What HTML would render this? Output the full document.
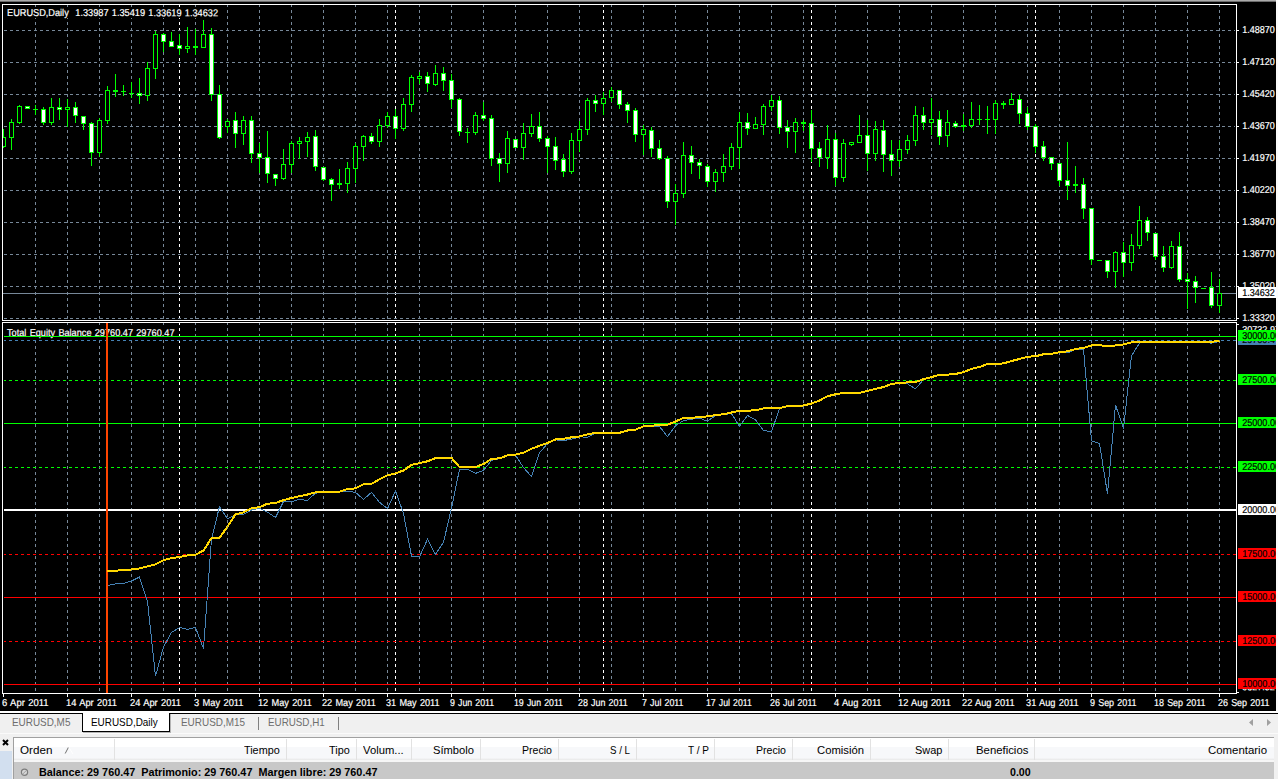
<!DOCTYPE html>
<html lang="es"><head><meta charset="utf-8"><title>EURUSD,Daily</title>
<style>
html,body{margin:0;padding:0;background:#f0f0f0;overflow:hidden}
body{width:1278px;height:779px;position:relative;font-family:"Liberation Sans", Arial, sans-serif;}
#chart{position:absolute;left:0;top:0;display:block}
#chart text{font-family:"Liberation Sans", Arial, sans-serif;font-size:10px;fill:#fff;stroke:#fff;stroke-width:.2px;paint-order:stroke;word-spacing:.8px}
.g{stroke:#778899;stroke-width:1;stroke-dasharray:3 3;fill:none}
.s{stroke:#fff;stroke-width:1;stroke-dasharray:3 3;fill:none}
.w{stroke:#00ff00;stroke-width:1;fill:none}
.u{fill:#000;stroke:#00ff00;stroke-width:1}
.d{fill:#fff;stroke:#00ff00;stroke-width:1}
.f{fill:#00ff00;stroke:none}
#tabs{position:absolute;left:0;top:711px;width:1278px;height:26px;background:#f0f0f0;font-size:11px}
.x{position:absolute;white-space:nowrap;line-height:13px;font-size:11px;transform-origin:0 0;display:block}
#term{position:absolute;left:0;top:737px;width:1278px;height:42px;background:#f0f0f0;font-size:11px}
#term .h{position:absolute;top:9px;color:#000;white-space:nowrap;line-height:13px}
#term .sep{position:absolute;top:2px;width:1px;height:21px;background:#e2e2e2}
</style></head><body>
<svg id="chart" width="1278" height="711" viewBox="0 0 1278 711" shape-rendering="crispEdges">
<rect x="0" y="0" width="1278" height="711" fill="#000"/>
<rect x="0" y="0" width="1278" height="1" fill="#ababab"/>
<rect x="0" y="1" width="1278" height="1" fill="#6d6d6d"/>
<rect x="1276" y="0" width="2" height="711" fill="#fbfbfb"/>
<path class="g" d="M35.5 4V693M67.5 4V693M99.5 4V693M131.5 4V693M163.5 4V693M195.5 4V693M227.5 4V693M259.5 4V693M291.5 4V693M323.5 4V693M355.5 4V693M387.5 4V693M419.5 4V693M451.5 4V693M483.5 4V693M515.5 4V693M547.5 4V693M579.5 4V693M611.5 4V693M643.5 4V693M675.5 4V693M707.5 4V693M739.5 4V693M771.5 4V693M803.5 4V693M835.5 4V693M867.5 4V693M899.5 4V693M931.5 4V693M963.5 4V693M995.5 4V693M1027.5 4V693M1059.5 4V693M1091.5 4V693M1123.5 4V693M1155.5 4V693M1187.5 4V693M1219.5 4V693"/>
<path class="s" d="M179.5 4V693M395.5 4V693M603.5 4V693M811.5 4V693M1035.5 4V693"/>
<path class="g" d="M4 30.5H1235M4 62.5H1235M4 94.5H1235M4 126.5H1235M4 158.5H1235M4 190.5H1235M4 222.5H1235M4 254.5H1235M4 286.5H1235M4 318.5H1235"/>
<rect x="0" y="321" width="1276" height="1" fill="#000"/>
<rect x="3" y="293" width="1233" height="1" fill="#778899"/>
<g clip-path="url(#cm)">
<clipPath id="cm"><rect x="3" y="5" width="1233" height="315"/></clipPath>
<path class="w" d="M3.5 129V148M11.5 119V150M19.5 105V124M27.5 106V109M35.5 105V115M43.5 107V125M51.5 98V125M59.5 98V120M67.5 99V127M75.5 102V123M83.5 116V130M91.5 122V166M99.5 118V157M107.5 86V124M115.5 74V97M123.5 85V96M131.5 82V98M139.5 78V104M147.5 62V101M155.5 31V79M163.5 33V52M171.5 32V47M179.5 34V55M187.5 27V53M195.5 29V55M203.5 20V48M211.5 28V101M219.5 85V139M227.5 119V133M235.5 112V148M243.5 116V145M251.5 116V163M259.5 143V173M267.5 131V183M275.5 174V186M283.5 149V180M291.5 141V173M299.5 137V159M307.5 132V157M315.5 130V171M323.5 167V181M331.5 178V201M339.5 169V189M347.5 162V193M355.5 143V183M363.5 135V161M371.5 133V144M379.5 119V147M387.5 112V128M395.5 109V139M403.5 98V131M411.5 75V112M419.5 72V84M427.5 72V92M435.5 65V86M443.5 67V91M451.5 74V108M459.5 98V136M467.5 128V143M475.5 112V135M483.5 102V121M491.5 115V166M499.5 153V182M507.5 131V173M515.5 139V148M523.5 123V160M531.5 114V137M539.5 112V142M547.5 136V173M555.5 137V170M563.5 154V177M571.5 133V174M579.5 121V152M587.5 98V135M595.5 95V112M603.5 92V115M611.5 87V102M619.5 90V109M627.5 102V123M635.5 108V142M643.5 125V155M651.5 127V157M659.5 140V160M667.5 156V208M675.5 184V225M683.5 142V198M691.5 146V174M699.5 159V179M707.5 164V187M715.5 169V192M723.5 154V182M731.5 143V170M739.5 112V169M747.5 113V135M755.5 117V129M763.5 104V135M771.5 95V111M779.5 96V134M787.5 120V148M795.5 118V153M803.5 120V131M811.5 110V162M819.5 142V167M827.5 125V169M835.5 133V186M843.5 139V182M851.5 142V146M859.5 115V143M867.5 120V171M875.5 121V161M883.5 120V172M891.5 140V176M899.5 140V167M907.5 135V154M915.5 106V146M923.5 107V130M931.5 98V135M939.5 111V145M947.5 110V147M955.5 121V128M963.5 114V131M971.5 102V128M979.5 105V125M987.5 106V134M995.5 100V134M1003.5 101V109M1011.5 93V105M1019.5 95V124M1027.5 107V130M1035.5 124V153M1043.5 141V161M1051.5 157V170M1059.5 163V186M1067.5 142V200M1075.5 166V193M1083.5 178V219M1091.5 208V265M1107.5 260V278M1115.5 251V288M1123.5 242V277M1131.5 234V271M1139.5 206V249M1147.5 217V241M1155.5 233V260M1163.5 246V272M1171.5 241V269M1179.5 232V282M1187.5 273V309M1195.5 276V303M1211.5 272V308M1219.5 279V313"/>
<path class="u" d="M1.5 137.5h4v9h-4zM9.5 122.5h4v15h-4zM17.5 106.5h4v16h-4zM49.5 107.5h4v15h-4zM65.5 107.5h4v2h-4zM97.5 120.5h4v32h-4zM105.5 90.5h4v30h-4zM145.5 68.5h4v27h-4zM153.5 34.5h4v34h-4zM185.5 46.5h4v2h-4zM201.5 34.5h4v13h-4zM225.5 121.5h4v5h-4zM241.5 120.5h4v13h-4zM281.5 164.5h4v14h-4zM289.5 143.5h4v21h-4zM297.5 141.5h4v2h-4zM305.5 137.5h4v4h-4zM345.5 168.5h4v15h-4zM353.5 146.5h4v22h-4zM361.5 136.5h4v10h-4zM377.5 125.5h4v16h-4zM385.5 116.5h4v9h-4zM401.5 104.5h4v24h-4zM409.5 77.5h4v27h-4zM417.5 76.5h4v2h-4zM433.5 73.5h4v11h-4zM473.5 115.5h4v17h-4zM505.5 138.5h4v25h-4zM521.5 133.5h4v14h-4zM529.5 126.5h4v7h-4zM569.5 140.5h4v31h-4zM577.5 129.5h4v11h-4zM585.5 100.5h4v29h-4zM601.5 98.5h4v5h-4zM609.5 90.5h4v7h-4zM641.5 129.5h4v5h-4zM673.5 193.5h4v8h-4zM681.5 155.5h4v38h-4zM713.5 172.5h4v9h-4zM721.5 166.5h4v6h-4zM729.5 147.5h4v19h-4zM737.5 122.5h4v25h-4zM753.5 124.5h4v4h-4zM761.5 106.5h4v18h-4zM769.5 100.5h4v6h-4zM793.5 122.5h4v9h-4zM825.5 139.5h4v18h-4zM841.5 143.5h4v34h-4zM849.5 142.5h4v2h-4zM857.5 135.5h4v7h-4zM873.5 129.5h4v24h-4zM897.5 149.5h4v11h-4zM905.5 140.5h4v9h-4zM913.5 115.5h4v25h-4zM929.5 119.5h4v3h-4zM945.5 122.5h4v13h-4zM969.5 119.5h4v6h-4zM993.5 103.5h4v16h-4zM1009.5 99.5h4v5h-4zM1113.5 252.5h4v19h-4zM1129.5 245.5h4v17h-4zM1137.5 220.5h4v25h-4zM1169.5 246.5h4v21h-4zM1217.5 293.5h4v12h-4z"/>
<path class="d" d="M25.5 106.5h4v2h-4zM41.5 109.5h4v13h-4zM57.5 107.5h4v2h-4zM73.5 107.5h4v8h-4zM81.5 116.5h4v7h-4zM89.5 123.5h4v29h-4zM137.5 93.5h4v2h-4zM161.5 34.5h4v7h-4zM169.5 41.5h4v5h-4zM177.5 45.5h4v3h-4zM209.5 34.5h4v60h-4zM217.5 94.5h4v43h-4zM233.5 120.5h4v13h-4zM249.5 120.5h4v33h-4zM257.5 153.5h4v4h-4zM265.5 157.5h4v16h-4zM273.5 174.5h4v4h-4zM313.5 136.5h4v30h-4zM321.5 167.5h4v12h-4zM329.5 179.5h4v5h-4zM369.5 136.5h4v5h-4zM393.5 116.5h4v12h-4zM425.5 76.5h4v7h-4zM441.5 73.5h4v7h-4zM449.5 80.5h4v19h-4zM457.5 99.5h4v32h-4zM481.5 115.5h4v3h-4zM489.5 118.5h4v40h-4zM497.5 158.5h4v5h-4zM513.5 139.5h4v8h-4zM537.5 126.5h4v12h-4zM545.5 138.5h4v8h-4zM553.5 146.5h4v14h-4zM561.5 159.5h4v12h-4zM593.5 100.5h4v3h-4zM617.5 90.5h4v14h-4zM625.5 104.5h4v6h-4zM633.5 110.5h4v24h-4zM649.5 130.5h4v18h-4zM657.5 148.5h4v10h-4zM665.5 158.5h4v43h-4zM689.5 155.5h4v7h-4zM697.5 162.5h4v3h-4zM705.5 166.5h4v15h-4zM745.5 122.5h4v6h-4zM777.5 100.5h4v27h-4zM785.5 127.5h4v4h-4zM809.5 123.5h4v25h-4zM817.5 148.5h4v9h-4zM833.5 139.5h4v38h-4zM865.5 135.5h4v18h-4zM881.5 130.5h4v24h-4zM889.5 154.5h4v6h-4zM921.5 115.5h4v7h-4zM937.5 119.5h4v17h-4zM953.5 123.5h4v3h-4zM1017.5 99.5h4v14h-4zM1025.5 113.5h4v13h-4zM1033.5 126.5h4v20h-4zM1041.5 146.5h4v11h-4zM1049.5 157.5h4v6h-4zM1057.5 163.5h4v17h-4zM1065.5 180.5h4v5h-4zM1081.5 184.5h4v24h-4zM1089.5 208.5h4v51h-4zM1105.5 260.5h4v11h-4zM1121.5 252.5h4v10h-4zM1145.5 220.5h4v12h-4zM1153.5 233.5h4v23h-4zM1161.5 256.5h4v11h-4zM1177.5 246.5h4v33h-4zM1185.5 279.5h4v2h-4zM1193.5 281.5h4v6h-4zM1209.5 287.5h4v18h-4z"/>
<path class="f" d="M33 109h5v1h-5zM113 90h5v2h-5zM121 91h5v1h-5zM129 93h5v1h-5zM193 46h5v2h-5zM337 183h5v2h-5zM465 132h5v1h-5zM801 122h5v2h-5zM961 125h5v2h-5zM977 119h5v1h-5zM985 119h5v1h-5zM1001 103h5v2h-5zM1073 184h5v2h-5zM1097 260h5v1h-5zM1201 288h5v1h-5z"/>
</g>
<rect x="6" y="327" width="170" height="11" fill="#000"/>
<text transform="translate(7,336) rotate(.05)" textLength="167.5" lengthAdjust="spacingAndGlyphs" shape-rendering="auto">Total Equity Balance 29760.47 29760.47</text>
<rect x="4" y="336" width="1232" height="1" fill="#00ff00"/>
<path d="M4 340.5H1236" stroke="#4682b4" stroke-width="1" stroke-dasharray="3 3" stroke-dashoffset="1" fill="none"/>
<path d="M4 380.5H1236" stroke="#00ff00" stroke-width="1" stroke-dasharray="3 3" stroke-dashoffset="1" fill="none"/>
<rect x="4" y="423" width="1232" height="1" fill="#00ff00"/>
<path d="M4 467.5H1236" stroke="#00ff00" stroke-width="1" stroke-dasharray="3 3" stroke-dashoffset="1" fill="none"/>
<rect x="4" y="509" width="1232" height="2" fill="#ffffff"/>
<path d="M4 554.5H1236" stroke="#ff0000" stroke-width="1" stroke-dasharray="3 3" stroke-dashoffset="1" fill="none"/>
<rect x="4" y="597" width="1232" height="1" fill="#ff0000"/>
<path d="M4 641.5H1236" stroke="#ff0000" stroke-width="1" stroke-dasharray="3 3" stroke-dashoffset="1" fill="none"/>
<rect x="4" y="684" width="1232" height="1" fill="#ff0000"/>
<rect x="106" y="323" width="2" height="370" fill="#ff4500"/>
<polyline points="107.5,585.4 115.5,583.9 123.5,583.5 131.5,581 139.5,577 147.5,601.6 155.5,676.3 163.5,647 171.5,632.4 179.5,627.5 187.5,629.3 195.5,627.5 203.5,648.6 211.5,539 219.5,506.5 227.5,518.8 235.5,515 243.5,514.5 251.5,510 259.5,508.2 267.5,512.1 275.5,517.5 283.5,501.6 291.5,501.6 299.5,499.4 307.5,500.4 315.5,493.1 323.5,492.4 331.5,492.4 339.5,492.1 347.5,491.2 355.5,492.4 363.5,499.4 371.5,492.4 379.5,502.3 387.5,508.6 395.5,491 403.5,513.5 411.5,556.1 419.5,557 427.5,539.2 435.5,554.5 443.5,542.2 451.5,508.1 459.5,469.4 467.5,469.4 475.5,473.4 483.5,470.3 491.5,460.4 499.5,458.7 507.5,455.8 515.5,455.1 523.5,467.6 531.5,476.6 539.5,452.9 547.5,443.4 555.5,439.9 563.5,440.5 571.5,439.2 579.5,436.8 587.5,437.3 595.5,433.4 603.5,433.4 611.5,433.4 619.5,433.2 627.5,430.9 635.5,430 643.5,426.8 651.5,426.1 659.5,426.4 667.5,436.6 675.5,425.7 683.5,420.6 691.5,419.3 699.5,418 707.5,421.3 715.5,415.5 723.5,414.6 731.5,413.6 739.5,426.4 747.5,415.5 755.5,420 763.5,430.5 771.5,431.8 779.5,408.4 787.5,406.6 795.5,406.3 803.5,405.9 811.5,403.9 819.5,400.9 827.5,396.6 835.5,394.7 843.5,393.4 851.5,393.4 859.5,393.3 867.5,391.4 875.5,389.2 883.5,387.5 891.5,384.3 899.5,383.4 907.5,383.9 915.5,388.8 923.5,379.6 931.5,377.5 939.5,375.3 947.5,375 955.5,374.4 963.5,372.5 971.5,369.3 979.5,367.4 987.5,364.4 995.5,364.4 1003.5,363.8 1011.5,361.4 1019.5,359.4 1027.5,357.2 1035.5,356.6 1043.5,354.7 1051.5,354.3 1059.5,352.6 1067.5,353 1075.5,349.4 1083.5,349.4 1091.5,440.9 1099.5,443.4 1107.5,493.9 1115.5,405 1123.5,428.4 1131.5,355.8 1139.5,343 1147.5,342.1 1155.5,342.1 1163.5,342.1 1171.5,342.1 1179.5,342.1 1187.5,342.1 1195.5,342.1 1203.5,342.1 1211.5,343.2 1219.5,341.4" fill="none" stroke="#4682b4" stroke-width="1" shape-rendering="crispEdges"/>
<polyline points="107.5,571 115.5,570.8 123.5,569.7 131.5,569.5 139.5,568.5 147.5,566.3 155.5,564.3 163.5,560.2 171.5,558.2 179.5,557 187.5,555.4 195.5,554.7 203.5,550.5 211.5,538 219.5,538 227.5,526.5 235.5,514.3 243.5,512.3 251.5,508.3 259.5,507.2 267.5,503.7 275.5,503 283.5,500.1 291.5,498 299.5,496.2 307.5,494.5 315.5,492.4 323.5,492 331.5,492 339.5,491.7 347.5,489.1 355.5,488.4 363.5,484.3 371.5,483.9 379.5,479.2 387.5,475.4 395.5,473.3 403.5,470.5 411.5,464.9 419.5,463.1 427.5,461.3 435.5,458.1 443.5,457.8 451.5,457.8 459.5,467.1 467.5,467.1 475.5,467.1 483.5,464 491.5,459 499.5,458.3 507.5,455.4 515.5,454.7 523.5,452.7 531.5,448.8 539.5,445.7 547.5,443 555.5,439.5 563.5,438.8 571.5,437.3 579.5,436.4 587.5,434.3 595.5,433 603.5,433 611.5,433 619.5,432.8 627.5,430.5 635.5,429.6 643.5,426.4 651.5,425.7 659.5,425.1 667.5,424.8 675.5,421.5 683.5,417.8 691.5,417.8 699.5,417.05 707.5,416.4 715.5,415.1 723.5,414.2 731.5,412.5 739.5,410.6 747.5,410.6 755.5,410.4 763.5,408.4 771.5,408 779.5,408 787.5,406.2 795.5,405.9 803.5,405.5 811.5,403.5 819.5,400.5 827.5,396.2 835.5,394.3 843.5,393 851.5,393 859.5,392.9 867.5,391 875.5,388.8 883.5,387.1 891.5,383.9 899.5,383 907.5,382.4 915.5,382 923.5,379.2 931.5,377.1 939.5,374.9 947.5,374.6 955.5,374 963.5,372.1 971.5,368.9 979.5,367 987.5,364 995.5,364 1003.5,363.4 1011.5,361 1019.5,359 1027.5,356.8 1035.5,356.2 1043.5,354.3 1051.5,353.9 1059.5,352.2 1067.5,351.3 1075.5,349 1083.5,347.9 1091.5,345.5 1099.5,345.3 1107.5,345.9 1115.5,345.5 1123.5,344.5 1131.5,342.3 1139.5,341.7 1147.5,341.7 1155.5,341.7 1163.5,341.7 1171.5,341.7 1179.5,341.7 1187.5,341.7 1195.5,341.7 1203.5,341.7 1211.5,341.7 1219.5,341" fill="none" stroke="#ffd700" stroke-width="2" stroke-linejoin="round" shape-rendering="crispEdges"/>
<path d="M2.5 4.5H1236.5V320.5H2.5zM2.5 322.5H1236.5V693.5H2.5z" fill="none" stroke="#fff" stroke-width="1"/>
<path d="M1237 30.5h2M1237 62.5h2M1237 94.5h2M1237 126.5h2M1237 158.5h2M1237 190.5h2M1237 222.5h2M1237 254.5h2M1237 286.5h2M1237 318.5h2M1237 324.5h2M1237 692.5h2" stroke="#fff" stroke-width="1" fill="none"/>
<path d="M3.5 694v3M67.5 694v3M131.5 694v3M195.5 694v3M259.5 694v3M323.5 694v3M387.5 694v3M451.5 694v3M515.5 694v3M579.5 694v3M643.5 694v3M707.5 694v3M771.5 694v3M835.5 694v3M899.5 694v3M963.5 694v3M1027.5 694v3M1091.5 694v3M1155.5 694v3M1219.5 694v3" stroke="#fff" stroke-width="1" fill="none"/>
<g shape-rendering="auto">
<rect x="6" y="7" width="214" height="11" fill="#000"/>
<text transform="translate(7,16) rotate(.05)" textLength="211" lengthAdjust="spacingAndGlyphs" xml:space="preserve">EURUSD,Daily  1.33987 1.35419 1.33619 1.34632</text>
<text transform="translate(1242.2,33) rotate(.05)" textLength="32.6" lengthAdjust="spacingAndGlyphs">1.48870</text>
<text transform="translate(1242.2,65) rotate(.05)" textLength="32.6" lengthAdjust="spacingAndGlyphs">1.47120</text>
<text transform="translate(1242.2,97) rotate(.05)" textLength="32.6" lengthAdjust="spacingAndGlyphs">1.45420</text>
<text transform="translate(1242.2,129) rotate(.05)" textLength="32.6" lengthAdjust="spacingAndGlyphs">1.43670</text>
<text transform="translate(1242.2,161) rotate(.05)" textLength="32.6" lengthAdjust="spacingAndGlyphs">1.41970</text>
<text transform="translate(1242.2,193) rotate(.05)" textLength="32.6" lengthAdjust="spacingAndGlyphs">1.40220</text>
<text transform="translate(1242.2,225) rotate(.05)" textLength="32.6" lengthAdjust="spacingAndGlyphs">1.38470</text>
<text transform="translate(1242.2,257) rotate(.05)" textLength="32.6" lengthAdjust="spacingAndGlyphs">1.36770</text>
<text transform="translate(1242.2,289) rotate(.05)" textLength="32.6" lengthAdjust="spacingAndGlyphs">1.35020</text>
<text transform="translate(1242.2,321) rotate(.05)" textLength="32.6" lengthAdjust="spacingAndGlyphs">1.33320</text>
<rect x="1238" y="287" width="38" height="11" fill="#fff"/>
<text transform="translate(1242.2,296) rotate(.05)" textLength="32.6" lengthAdjust="spacingAndGlyphs" style="fill:#000;stroke:#000">1.34632</text>
<clipPath id="ca"><rect x="1237" y="323" width="39" height="370"/></clipPath>
<g clip-path="url(#ca)">
<text transform="translate(1242.2,333) rotate(.05)" textLength="37.8" lengthAdjust="spacingAndGlyphs">30732.97</text>
<rect x="1238" y="341" width="38" height="4" fill="#4682b4"/>
<text transform="translate(1242.2,343) rotate(.05)" textLength="37.8" lengthAdjust="spacingAndGlyphs" style="fill:#000;stroke:#000">29760.47</text>
<text transform="translate(1242.2,690.3) rotate(.05)" textLength="32.6" lengthAdjust="spacingAndGlyphs">9327.52</text>
<rect x="1238" y="330" width="38" height="11" fill="#00ff00"/>
<text transform="translate(1242.2,339) rotate(.05)" textLength="37.8" lengthAdjust="spacingAndGlyphs" style="fill:#000;stroke:#000">30000.00</text>
<rect x="1238" y="374" width="38" height="11" fill="#00ff00"/>
<text transform="translate(1242.2,383) rotate(.05)" textLength="37.8" lengthAdjust="spacingAndGlyphs" style="fill:#000;stroke:#000">27500.00</text>
<rect x="1238" y="417" width="38" height="11" fill="#00ff00"/>
<text transform="translate(1242.2,426) rotate(.05)" textLength="37.8" lengthAdjust="spacingAndGlyphs" style="fill:#000;stroke:#000">25000.00</text>
<rect x="1238" y="461" width="38" height="11" fill="#00ff00"/>
<text transform="translate(1242.2,470) rotate(.05)" textLength="37.8" lengthAdjust="spacingAndGlyphs" style="fill:#000;stroke:#000">22500.00</text>
<rect x="1238" y="504" width="38" height="11" fill="#ffffff"/>
<text transform="translate(1242.2,513) rotate(.05)" textLength="37.8" lengthAdjust="spacingAndGlyphs" style="fill:#000;stroke:#000">20000.00</text>
<rect x="1238" y="548" width="38" height="11" fill="#ff0000"/>
<text transform="translate(1242.2,557) rotate(.05)" textLength="37.8" lengthAdjust="spacingAndGlyphs" style="fill:#000;stroke:#000">17500.00</text>
<rect x="1238" y="591" width="38" height="11" fill="#ff0000"/>
<text transform="translate(1242.2,600) rotate(.05)" textLength="37.8" lengthAdjust="spacingAndGlyphs" style="fill:#000;stroke:#000">15000.00</text>
<rect x="1238" y="635" width="38" height="11" fill="#ff0000"/>
<text transform="translate(1242.2,644) rotate(.05)" textLength="37.8" lengthAdjust="spacingAndGlyphs" style="fill:#000;stroke:#000">12500.00</text>
<rect x="1238" y="678" width="38" height="11" fill="#ff0000"/>
<text transform="translate(1242.2,687) rotate(.05)" textLength="37.8" lengthAdjust="spacingAndGlyphs" style="fill:#000;stroke:#000">10000.00</text>
</g>
<text transform="translate(2,706) rotate(.05)" textLength="46.5" lengthAdjust="spacingAndGlyphs">6 Apr 2011</text>
<text transform="translate(66,706) rotate(.05)" textLength="51" lengthAdjust="spacingAndGlyphs">14 Apr 2011</text>
<text transform="translate(130,706) rotate(.05)" textLength="51" lengthAdjust="spacingAndGlyphs">24 Apr 2011</text>
<text transform="translate(194,706) rotate(.05)" textLength="49.5" lengthAdjust="spacingAndGlyphs">3 May 2011</text>
<text transform="translate(258,706) rotate(.05)" textLength="54" lengthAdjust="spacingAndGlyphs">12 May 2011</text>
<text transform="translate(322,706) rotate(.05)" textLength="53.8" lengthAdjust="spacingAndGlyphs">22 May 2011</text>
<text transform="translate(386,706) rotate(.05)" textLength="53.5" lengthAdjust="spacingAndGlyphs">31 May 2011</text>
<text transform="translate(450,706) rotate(.05)" textLength="44.1" lengthAdjust="spacingAndGlyphs">9 Jun 2011</text>
<text transform="translate(514,706) rotate(.05)" textLength="49" lengthAdjust="spacingAndGlyphs">19 Jun 2011</text>
<text transform="translate(578,706) rotate(.05)" textLength="49.7" lengthAdjust="spacingAndGlyphs">28 Jun 2011</text>
<text transform="translate(642,706) rotate(.05)" textLength="41.5" lengthAdjust="spacingAndGlyphs">7 Jul 2011</text>
<text transform="translate(706,706) rotate(.05)" textLength="45.9" lengthAdjust="spacingAndGlyphs">17 Jul 2011</text>
<text transform="translate(770,706) rotate(.05)" textLength="46.7" lengthAdjust="spacingAndGlyphs">26 Jul 2011</text>
<text transform="translate(834,706) rotate(.05)" textLength="47.5" lengthAdjust="spacingAndGlyphs">4 Aug 2011</text>
<text transform="translate(898,706) rotate(.05)" textLength="52.9" lengthAdjust="spacingAndGlyphs">12 Aug 2011</text>
<text transform="translate(962,706) rotate(.05)" textLength="52.6" lengthAdjust="spacingAndGlyphs">22 Aug 2011</text>
<text transform="translate(1026,706) rotate(.05)" textLength="52.6" lengthAdjust="spacingAndGlyphs">31 Aug 2011</text>
<text transform="translate(1090,706) rotate(.05)" textLength="46.5" lengthAdjust="spacingAndGlyphs">9 Sep 2011</text>
<text transform="translate(1154,706) rotate(.05)" textLength="51.5" lengthAdjust="spacingAndGlyphs">18 Sep 2011</text>
<text transform="translate(1218,706) rotate(.05)" textLength="51.5" lengthAdjust="spacingAndGlyphs">26 Sep 2011</text>
</g>
</svg>
<div id="tabs">
<div style="position:absolute;left:0;top:0;width:1278px;height:2px;background:#fff"></div>
<div style="position:absolute;left:0;top:2px;width:1278px;height:1px;background:#000"></div>
<div style="position:absolute;left:83px;top:0;width:86px;height:20px;background:#fff"></div>
<div style="position:absolute;left:82px;top:2px;width:86px;height:18px;border:1px solid #000;border-top:none;box-shadow:1px 1px 0 #b4b4b4"></div>
<span id="t1" class="x" style="left:11.9px;top:4.7px;color:#6d6d6d;transform:scaleX(0.9013)">EURUSD,M5</span>
<span id="t2" class="x" style="left:91.1px;top:4.7px;color:#000;transform:scaleX(0.9017)">EURUSD,Daily</span>
<span id="t3" class="x" style="left:181.3px;top:4.7px;color:#6d6d6d;transform:scaleX(0.9026)">EURUSD,M15</span>
<div style="position:absolute;left:258px;top:6px;width:1px;height:13px;background:#808080"></div>
<span id="t4" class="x" style="left:267.9px;top:4.7px;color:#6d6d6d;transform:scaleX(0.8918)">EURUSD,H1</span>
<div style="position:absolute;left:338px;top:6px;width:1px;height:13px;background:#808080"></div>
<svg style="position:absolute;left:1246px;top:7px" width="28" height="10" viewBox="0 0 28 10"><path d="M7 1v7l-4-3.500zM21 1v7l4-3.500z" fill="#a0a0a0"/></svg>
<div style="position:absolute;left:0;top:22px;width:1278px;height:1px;background:#fafafa"></div>
</div>
<div id="term">
<div style="position:absolute;left:0;top:14px;width:12px;height:28px;background:#d2dfef"></div>
<svg style="position:absolute;left:2px;top:2px" width="8" height="8" viewBox="0 0 8 8"><path d="M1 1l5 5M6 1l-5 5" stroke="#000" stroke-width="2" fill="none"/></svg>
<div style="position:absolute;left:13px;top:0;width:1261px;height:42px;border-left:1px solid #a0a0a0;border-top:1px solid #a0a0a0;box-sizing:border-box;background:#fff"></div>
<div style="position:absolute;left:14px;top:1px;width:1260px;height:22px;background:linear-gradient(#fff 0,#fff 40%,#f7f8fa 41%,#f7f8fa 90%,#e8e8e8 100%)"></div>
<div style="position:absolute;left:14px;top:23px;width:1260px;height:2px;background:#f6f6f6"></div>
<div style="position:absolute;left:14px;top:25px;width:1260px;height:17px;background:#c8c8c8"></div>
<div class="sep" style="left:114px"></div>
<div class="sep" style="left:286px"></div>
<div class="sep" style="left:356px"></div>
<div class="sep" style="left:411px"></div>
<div class="sep" style="left:480px"></div>
<div class="sep" style="left:558px"></div>
<div class="sep" style="left:636px"></div>
<div class="sep" style="left:714px"></div>
<div class="sep" style="left:792px"></div>
<div class="sep" style="left:870px"></div>
<div class="sep" style="left:948px"></div>
<div class="sep" style="left:1034px"></div>
<span id="t5" class="x" style="left:19.8px;top:6.7px;color:#000;transform:scaleX(1.0596)">Orden</span>
<svg style="position:absolute;left:63px;top:8px" width="12" height="10" viewBox="0 0 12 10"><path d="M2.200 8.500L5.600 2" stroke="#707070" stroke-width="1" fill="none"/><path d="M5.600 2L10 9" stroke="#ffffff" stroke-width="1" fill="none"/></svg>
<span id="t6" class="x" style="left:243.9px;top:6.7px;color:#000;transform:scaleX(0.9840)">Tiempo</span>
<span id="t7" class="x" style="left:328.9px;top:6.7px;color:#000;transform:scaleX(0.9857)">Tipo</span>
<span id="t8" class="x" style="left:362.9px;top:6.7px;color:#000;transform:scaleX(1.0239)">Volum...</span>
<span id="t9" class="x" style="left:432.9px;top:6.7px;color:#000;transform:scaleX(1.0159)">Símbolo</span>
<span id="t10" class="x" style="left:522.3px;top:6.7px;color:#000;transform:scaleX(0.9619)">Precio</span>
<span id="t11" class="x" style="left:609.9px;top:6.7px;color:#000;transform:scaleX(0.8840)">S / L</span>
<span id="t12" class="x" style="left:687.9px;top:6.7px;color:#000;transform:scaleX(0.9118)">T / P</span>
<span id="t13" class="x" style="left:756.3px;top:6.7px;color:#000;transform:scaleX(0.9619)">Precio</span>
<span id="t14" class="x" style="left:817.3px;top:6.7px;color:#000;transform:scaleX(1.0249)">Comisión</span>
<span id="t15" class="x" style="left:914.9px;top:6.7px;color:#000;transform:scaleX(0.9952)">Swap</span>
<span id="t16" class="x" style="left:975.9px;top:6.7px;color:#000;transform:scaleX(1.0322)">Beneficios</span>
<span id="t17" class="x" style="left:1208.3px;top:6.7px;color:#000;transform:scaleX(1.0376)">Comentario</span>
<svg style="position:absolute;left:20px;top:30px" width="10" height="10" viewBox="0 0 10 10"><circle cx="4.500" cy="5.300" r="3.100" fill="#d6d6d6" stroke="#7c7c7c" stroke-width="1.2"/><path d="M2.600 7.200L6.400 3.400" stroke="#a0a0a0" stroke-width="1"/></svg>
<span id="t18" class="x" style="left:38.9px;top:28.7px;color:#000;font-weight:bold;transform:scaleX(0.9831)">Balance: 29 760.47&nbsp; Patrimonio: 29 760.47&nbsp; Margen libre: 29 760.47</span>
<span id="t19" class="x" style="left:1009.9px;top:28.7px;color:#000;font-weight:bold;transform:scaleX(0.9663)">0.00</span>
</div>
</body></html>
